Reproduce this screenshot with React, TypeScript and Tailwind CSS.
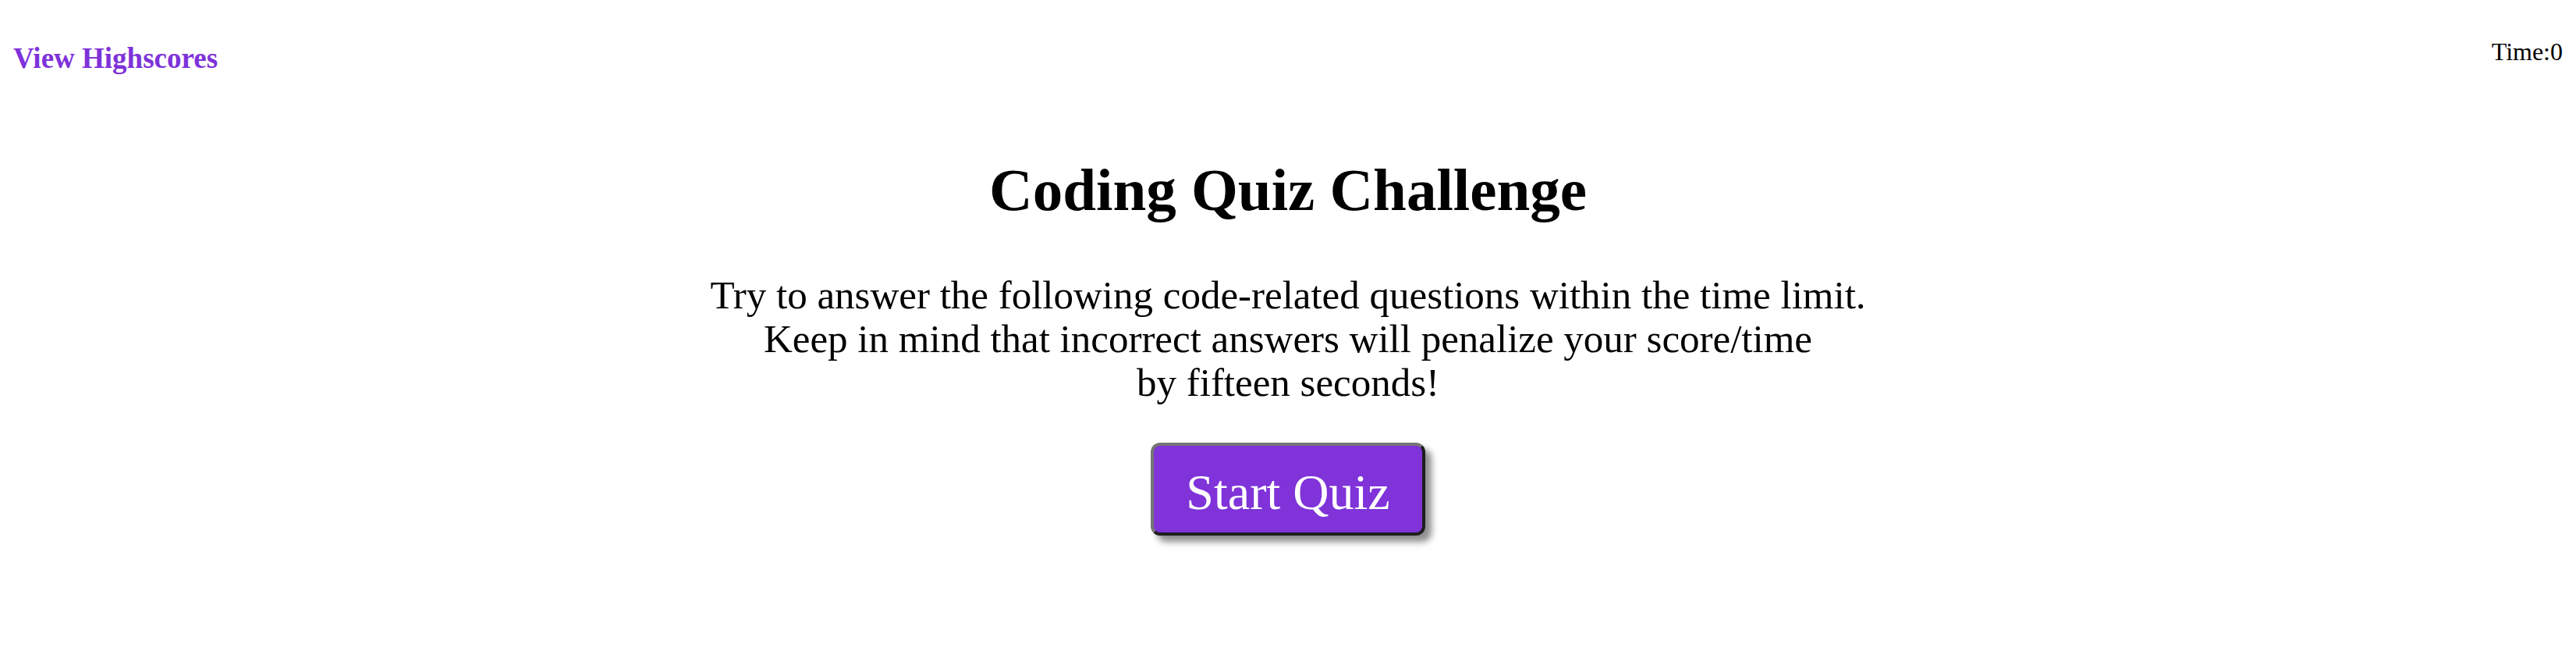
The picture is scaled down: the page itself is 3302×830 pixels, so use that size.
import React from "react";

export default function App() {
  return (
    <div className="min-h-[830px] w-full bg-white font-['Liberation_Serif',serif] text-black">
      <header className="flex items-start justify-between px-[17px]">
        <a className="mt-[56px] text-[37px] font-bold leading-none text-[#7e32d9] cursor-pointer">
          View Highscores
        </a>
        <div className="mt-[50px] text-[32px] leading-none">Time:0</div>
      </header>
      <main className="flex flex-col items-center">
        <h1 className="mt-[112px] text-[77px] font-bold leading-none">Coding Quiz Challenge</h1>
        <p className="mt-[68px] text-center text-[51px] leading-[56px]">
          Try to answer the following code-related questions within the time limit.
          <br />
          Keep in mind that incorrect answers will penalize your score/time
          <br />
          by fifteen seconds!
        </p>
        <button className="mt-[49px] flex h-[119px] w-[352px] items-center justify-center rounded-[12px] border-[4px] border-t-[#757575] border-l-[#757575] border-b-[#1e1e1e] border-r-[#1e1e1e] bg-[#7f33d9] pt-[8px] text-[64px] leading-none text-white shadow-[8px_8px_8px_rgba(0,0,0,0.45)]">
          Start Quiz
        </button>
      </main>
    </div>
  );
}
